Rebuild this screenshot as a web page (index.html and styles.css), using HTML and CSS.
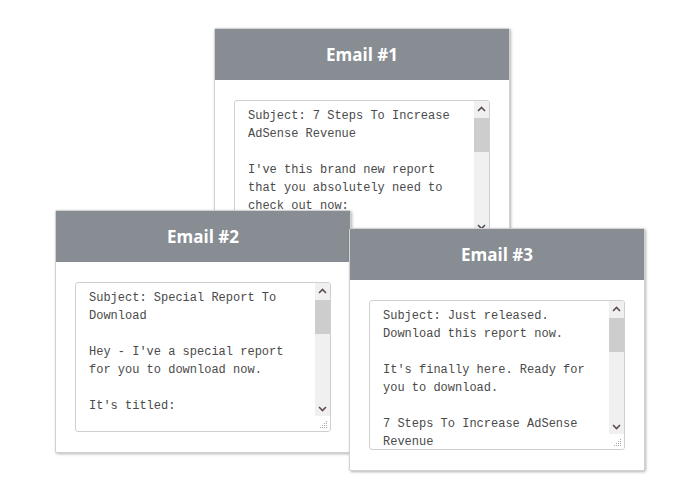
FILE: index.html
```html
<!DOCTYPE html>
<html>
<head>
<meta charset="utf-8">
<link rel="stylesheet" href="styles.css">
</head>
<body>
<div class="canvas">
  <div class="card card-1">
    <div class="card-head">Email #1</div>
    <div class="card-body">
      <div class="mail">
        <div class="mail-text">Subject: 7 Steps To Increase AdSense Revenue

I've this brand new report that you absolutely need to check out now:

7 Steps To Increase AdSense Revenue

Get it here today.</div>
        <div class="scrollbar">
          <div class="sb-btn"><svg width="9" height="6" viewBox="0 0 9 6"><path d="M1 5 L4.5 1.5 L8 5" fill="none" stroke="#5a4a55" stroke-width="1.6"/></svg></div>
          <div class="sb-track"><div class="sb-thumb"></div></div>
          <div class="sb-btn"><svg width="9" height="6" viewBox="0 0 9 6"><path d="M1 1 L4.5 4.5 L8 1" fill="none" stroke="#5a4a55" stroke-width="1.6"/></svg></div>
          <div class="sb-corner"><svg width="8" height="8" viewBox="0 0 8 8" fill="#a8a8a8"><rect x="6" y="0" width="1" height="1"/><rect x="4" y="2" width="1" height="1"/><rect x="6" y="2" width="1" height="1"/><rect x="2" y="4" width="1" height="1"/><rect x="4" y="4" width="1" height="1"/><rect x="6" y="4" width="1" height="1"/><rect x="0" y="6" width="1" height="1"/><rect x="2" y="6" width="1" height="1"/><rect x="4" y="6" width="1" height="1"/><rect x="6" y="6" width="1" height="1"/></svg></div>
        </div>
      </div>
    </div>
  </div>
  <div class="card card-2">
    <div class="card-head">Email #2</div>
    <div class="card-body">
      <div class="mail">
        <div class="mail-text">Subject: Special Report To Download

Hey - I've a special report for you to download now.

It's titled:

7 Steps To Increase AdSense Revenue

Grab it today.</div>
        <div class="scrollbar">
          <div class="sb-btn"><svg width="9" height="6" viewBox="0 0 9 6"><path d="M1 5 L4.5 1.5 L8 5" fill="none" stroke="#5a4a55" stroke-width="1.6"/></svg></div>
          <div class="sb-track"><div class="sb-thumb"></div></div>
          <div class="sb-btn"><svg width="9" height="6" viewBox="0 0 9 6"><path d="M1 1 L4.5 4.5 L8 1" fill="none" stroke="#5a4a55" stroke-width="1.6"/></svg></div>
          <div class="sb-corner"><svg width="8" height="8" viewBox="0 0 8 8" fill="#a8a8a8"><rect x="6" y="0" width="1" height="1"/><rect x="4" y="2" width="1" height="1"/><rect x="6" y="2" width="1" height="1"/><rect x="2" y="4" width="1" height="1"/><rect x="4" y="4" width="1" height="1"/><rect x="6" y="4" width="1" height="1"/><rect x="0" y="6" width="1" height="1"/><rect x="2" y="6" width="1" height="1"/><rect x="4" y="6" width="1" height="1"/><rect x="6" y="6" width="1" height="1"/></svg></div>
        </div>
      </div>
    </div>
  </div>
  <div class="card card-3">
    <div class="card-head">Email #3</div>
    <div class="card-body">
      <div class="mail">
        <div class="mail-text">Subject: Just released. Download this report now.

It's finally here. Ready for you to download.

7 Steps To Increase AdSense Revenue

Download it now.</div>
        <div class="scrollbar">
          <div class="sb-btn"><svg width="9" height="6" viewBox="0 0 9 6"><path d="M1 5 L4.5 1.5 L8 5" fill="none" stroke="#5a4a55" stroke-width="1.6"/></svg></div>
          <div class="sb-track"><div class="sb-thumb"></div></div>
          <div class="sb-btn"><svg width="9" height="6" viewBox="0 0 9 6"><path d="M1 1 L4.5 4.5 L8 1" fill="none" stroke="#5a4a55" stroke-width="1.6"/></svg></div>
          <div class="sb-corner"><svg width="8" height="8" viewBox="0 0 8 8" fill="#a8a8a8"><rect x="6" y="0" width="1" height="1"/><rect x="4" y="2" width="1" height="1"/><rect x="6" y="2" width="1" height="1"/><rect x="2" y="4" width="1" height="1"/><rect x="4" y="4" width="1" height="1"/><rect x="6" y="4" width="1" height="1"/><rect x="0" y="6" width="1" height="1"/><rect x="2" y="6" width="1" height="1"/><rect x="4" y="6" width="1" height="1"/><rect x="6" y="6" width="1" height="1"/></svg></div>
        </div>
      </div>
    </div>
  </div>
</div>
</body>
</html>
```

FILE: styles.css
```css
html, body {
  margin: 0;
  padding: 0;
  background: #ffffff;
}

.canvas {
  position: relative;
  width: 700px;
  height: 500px;
}

.card {
  position: absolute;
  box-sizing: border-box;
  width: 296px;
  background: #ffffff;
  border: 1px solid #d2d2d2;
  box-shadow: 1px 1px 3px rgba(0, 0, 0, 0.3);
  border-radius: 2px;
  font-family: "Open Sans", "Liberation Sans", sans-serif;
}

.card-1 { left: 214px; top: 28px; }
.card-2 { left: 55px; top: 210px; }
.card-3 { left: 349px; top: 228px; }

.card-head {
  height: 51px;
  background: #878d93;
  color: #ffffff;
  font-weight: 700;
  font-size: 17px;
  display: flex;
  align-items: center;
  justify-content: center;
}

.card-body {
  padding: 20px 19px 20px 19px;
  display: flex;
}

.mail {
  box-sizing: border-box;
  width: 256px;
  height: 150px;
  border: 1px solid #cfcfcf;
  border-radius: 3px;
  background: #ffffff;
  display: flex;
  overflow: hidden;
}

.mail-text {
  flex: 1;
  padding: 6px 13px;
  font-family: "Liberation Mono", "Courier New", monospace;
  font-size: 12px;
  line-height: 18px;
  color: #4a4a4a;
  white-space: pre-wrap;
  overflow: hidden;
}

.scrollbar {
  width: 15px;
  display: flex;
  flex-direction: column;
}

.sb-btn {
  height: 15px;
  background: #f0f0f0;
  display: flex;
  align-items: center;
  justify-content: center;
}

.sb-track {
  flex: 1;
  background: #f0f0f0;
  padding: 2px 0 0 0;
}

.sb-thumb {
  height: 34px;
  background: #cdcdcd;
}

.sb-corner {
  height: 15px;
  background: #ffffff;
  display: flex;
  align-items: flex-end;
  justify-content: flex-end;
  padding: 0 2px 2px 0;
  box-sizing: border-box;
}
```
